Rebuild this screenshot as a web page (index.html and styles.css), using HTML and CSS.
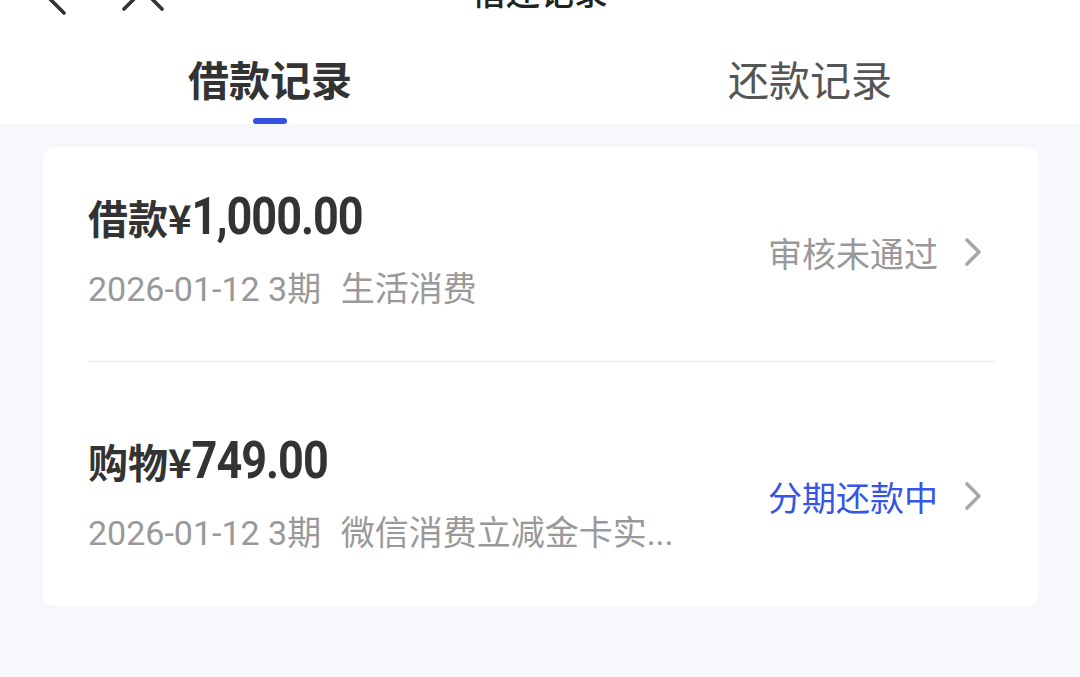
FILE: index.html
```html
<!DOCTYPE html>
<html lang="zh-CN">
<head>
    <meta charset="UTF-8">
    <meta name="viewport" content="width=device-width, initial-scale=1.0">
    <title>借还记录</title>
    <link rel="stylesheet" href="styles.css">
</head>
<body>
    <div class="top">
        <div class="nav-bar">
            <div class="nav-icons">
                <svg class="nav-back" width="40" height="40" viewBox="0 0 40 40">
                    <path d="M28 2 L10 20 L28 38" fill="none" stroke="#333" stroke-width="3.6" stroke-linecap="round" stroke-linejoin="round"/>
                </svg>
                <svg class="nav-close" width="44" height="44" viewBox="0 0 44 44">
                    <path d="M3 3 L41 41 M41 3 L3 41" fill="none" stroke="#333" stroke-width="3.6" stroke-linecap="round"/>
                </svg>
            </div>
            <div class="nav-title">借还记录</div>
        </div>
        <div class="tabs">
            <div class="tab active">借款记录</div>
            <div class="tab">还款记录</div>
        </div>
    </div>

    <div class="card">
        <div class="record">
            <div class="record-info">
                <div class="record-title">借款¥<span class="amount">1,000.00</span></div>
                <div class="record-sub">2026-01-12 3期 <span class="record-cat">生活消费</span></div>
            </div>
            <div class="record-status">审核未通过</div>
            <svg class="chevron" width="18" height="30" viewBox="0 0 18 30">
                <path d="M3 3 L15 15 L3 27" fill="none" stroke="#a8a8a8" stroke-width="3.6" stroke-linecap="round" stroke-linejoin="round"/>
            </svg>
        </div>
        <div class="record second">
            <div class="record-info">
                <div class="record-title">购物¥<span class="amount">749.00</span></div>
                <div class="record-sub">2026-01-12 3期 <span class="record-cat">微信消费立减金卡实...</span></div>
            </div>
            <div class="record-status blue">分期还款中</div>
            <svg class="chevron" width="18" height="30" viewBox="0 0 18 30">
                <path d="M3 3 L15 15 L3 27" fill="none" stroke="#a8a8a8" stroke-width="3.6" stroke-linecap="round" stroke-linejoin="round"/>
            </svg>
        </div>
    </div>
</body>
</html>
```

FILE: styles.css
```css
body {
    margin: 0;
    padding: 0;
    min-height: 100vh;
    background-color: #f7f8fc;
    font-family: Roboto, "Noto Sans CJK SC", sans-serif;
    color: #333;
    overflow: hidden;
}

.top {
    background-color: #fff;
}

.nav-bar {
    height: 80px;
    margin-top: -50px;
    position: relative;
    display: flex;
    align-items: center;
    justify-content: center;
}

.nav-icons {
    position: absolute;
    left: 36px;
    top: 0;
    height: 80px;
    display: flex;
    align-items: center;
    gap: 45px;
}

.nav-back {
    margin-top: 10px;
}

.nav-title {
    font-size: 34px;
    font-weight: 500;
    color: #222;
}

.tabs {
    display: flex;
    height: 94px;
}

.tab {
    flex: 1;
    display: flex;
    justify-content: center;
    padding-top: 24px;
    font-size: 41px;
    line-height: 56px;
    color: #555;
    position: relative;
}

.tab.active {
    font-weight: 700;
    color: #333;
}

.tab.active::after {
    content: "";
    position: absolute;
    bottom: 0;
    left: 50%;
    width: 34px;
    height: 6px;
    margin-left: -17px;
    border-radius: 3px;
    background-color: #3452e1;
}

.card {
    margin: 23px 42px 0 43px;
    padding: 0 43px 0 45px;
    background-color: #fff;
    border-radius: 12px;
}

.record {
    display: flex;
    align-items: center;
    padding: 42px 0 50px;
}

.record.second {
    padding-top: 71px;
    padding-bottom: 51px;
    border-top: 1px solid #ececec;
}

.record-info {
    flex: 1;
    min-width: 0;
}

.record-title {
    font-family: "Noto Sans CJK SC", sans-serif;
    font-size: 40px;
    line-height: 56px;
    font-weight: 700;
    color: #333;
}

.amount {
    display: inline-block;
    font-family: Roboto, sans-serif;
    font-size: 45px;
    font-weight: 700;
    letter-spacing: -1px;
    transform: scaleY(1.17);
    transform-origin: 50% 75%;
}

.record-sub {
    margin-top: 20px;
    font-size: 34px;
    line-height: 44px;
    color: #999;
    white-space: nowrap;
}

.record-cat {
    margin-left: 11px;
}

.record-status {
    font-size: 34px;
    color: #999;
    margin-top: 4px;
}

.record-status.blue {
    color: #3556e6;
}

.chevron {
    margin-left: 26px;
    margin-right: 13px;
    margin-top: 4px;
}
```
